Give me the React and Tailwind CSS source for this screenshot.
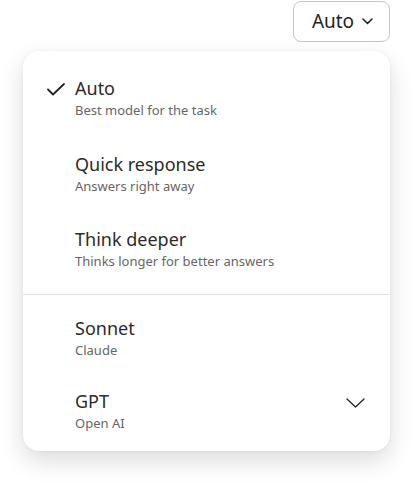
import React from "react";

const font = { fontFamily: '"Noto Sans", "Open Sans", sans-serif' };

function Item({ title, sub, checked, chevron, className = "" }) {
  return (
    <div className={`relative flex items-start pl-[52px] pr-[24px] ${className}`}>
      {checked && (
        <svg className="absolute left-[24px] top-[7px]" width="18" height="13" viewBox="0 0 18 13" fill="none">
          <path d="M1 6.5 L6 11.5 L17 1" stroke="#242424" strokeWidth="1.8" strokeLinecap="round" strokeLinejoin="round" />
        </svg>
      )}
      <div className="flex-1">
        <div className="text-[18px] leading-[25px] text-[#2b2b2b]">{title}</div>
        <div className="text-[13px] leading-[18px] text-[#666666]">{sub}</div>
      </div>
      {chevron && (
        <svg className="mt-[9px] mr-[1px]" width="19" height="10" viewBox="0 0 19 10" fill="none">
          <path d="M1 1 L9.5 9 L18 1" stroke="#242424" strokeWidth="1.3" strokeLinecap="round" strokeLinejoin="round" />
        </svg>
      )}
    </div>
  );
}

export default function App() {
  return (
    <div className="w-[413px] h-[483px] bg-white overflow-hidden" style={font}>
      <div className="flex justify-end pr-[23px] pt-px">
        <button className="w-[97px] h-[41px] rounded-[8px] border border-[#c4c4c4] bg-white flex items-center justify-center gap-[8px] pl-[2px] text-[19px] text-[#242424]">
          <span>Auto</span>
          <svg width="11" height="7" viewBox="0 0 11 7" fill="none">
            <path d="M1 1 L5.5 5.5 L10 1" stroke="#242424" strokeWidth="1.6" strokeLinecap="round" strokeLinejoin="round" />
          </svg>
        </button>
      </div>
      <div className="mx-[23px] mt-[9px] h-[400px] rounded-[16px] bg-white shadow-[0_10px_24px_rgba(0,0,0,0.14),0_0_4px_rgba(0,0,0,0.05)] pt-[25px]">
        <Item title="Auto" sub="Best model for the task" checked />
        <Item title="Quick response" sub="Answers right away" className="mt-[33px]" />
        <Item title="Think deeper" sub="Thinks longer for better answers" className="mt-[32px]" />
        <div className="mt-[24px] h-px bg-[#e0e0e0]" />
        <Item title="Sonnet" sub="Claude" className="mt-[21px]" />
        <Item title="GPT" sub="Open AI" chevron className="mt-[30px]" />
      </div>
    </div>
  );
}
